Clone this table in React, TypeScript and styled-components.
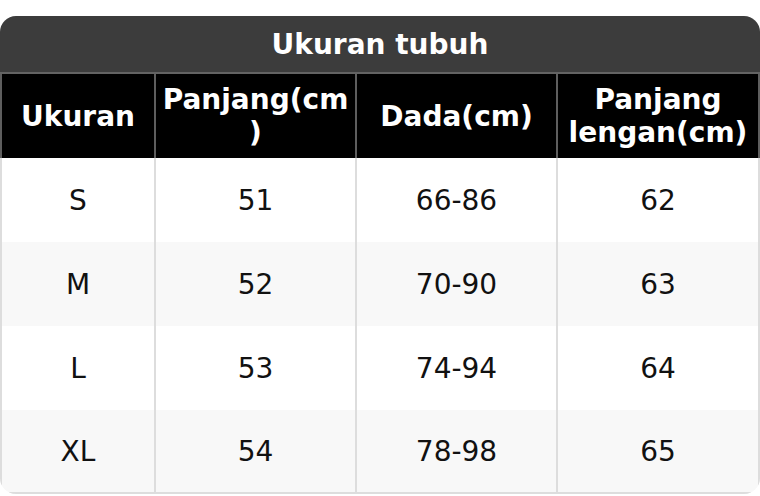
import React, { FunctionComponent, ReactNode } from 'react';
import styled, { createGlobalStyle } from 'styled-components';

const GlobalStyle = createGlobalStyle`
  html, body {
    margin: 0;
    padding: 0;
    background: #ffffff;
  }
  body {
    font-family: "DejaVu Sans", "Noto Sans", sans-serif;
  }
`;

const Page = styled.div`
  width: 760px;
  padding-top: 16px;
`;

const Card = styled.div`
  border-radius: 16px;
  overflow: hidden;
  background: #ffffff;
`;

const Title = styled.div`
  height: 56px;
  display: flex;
  align-items: center;
  justify-content: center;
  background: #3c3c3c;
  color: #ffffff;
  font-size: 28px;
  font-weight: bold;
  border-bottom: 2px solid #636363;
`;

const Grid = styled.div`
  display: grid;
  grid-template-columns: 156px 201px 201px 1fr;
  grid-auto-rows: 84px;
`;

const Cell = styled.div<{ head?: boolean; first?: boolean; striped?: boolean; last?: boolean }>`
  display: flex;
  align-items: center;
  justify-content: center;
  text-align: center;
  padding: 0 6px;
  font-size: 28px;
  overflow-wrap: anywhere;
  min-width: 0;
  background: ${({ head, striped }) => (head ? '#000000' : striped ? '#f8f8f8' : '#ffffff')};
  color: ${({ head }) => (head ? '#ffffff' : '#111111')};
  font-weight: ${({ head }) => (head ? 'bold' : 'normal')};
  border-right: 2px solid ${({ head }) => (head ? '#5e5e5e' : '#dddddd')};
  border-left: ${({ first, head }) => (first ? `2px solid ${head ? '#5e5e5e' : '#dddddd'}` : 'none')};
  border-bottom: ${({ last }) => (last ? '2px solid #dddddd' : 'none')};
`;

const headers: { key: string; label: ReactNode }[] = [
  { key: 'size', label: 'Ukuran' },
  { key: 'length', label: <>Panjang(cm<wbr />)</> },
  { key: 'chest', label: 'Dada(cm)' },
  { key: 'sleeve', label: 'Panjang lengan(cm)' },
];

const rows = [
  ['S', '51', '66-86', '62'],
  ['M', '52', '70-90', '63'],
  ['L', '53', '74-94', '64'],
  ['XL', '54', '78-98', '65'],
];

const App: FunctionComponent = () => {
  return (
    <Page>
      <GlobalStyle />
      <Card>
        <Title>Ukuran tubuh</Title>
        <Grid>
          {headers.map((h, i) => (
            <Cell key={h.key} head first={i === 0}>
              <span>{h.label}</span>
            </Cell>
          ))}
          {rows.map((row, r) =>
            row.map((v, i) => (
              <Cell
                key={`${r}-${i}`}
                first={i === 0}
                striped={r % 2 === 1}
                last={r === rows.length - 1}
              >
                {v}
              </Cell>
            ))
          )}
        </Grid>
      </Card>
    </Page>
  );
};

export default App;
